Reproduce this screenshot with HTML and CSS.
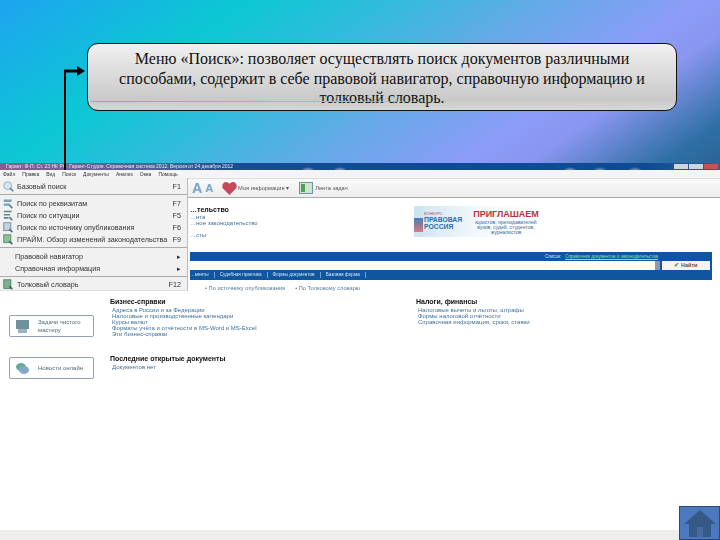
FILE: index.html
```html
<!DOCTYPE html>
<html lang="ru">
<head>
<meta charset="utf-8">
<title>Меню Поиск</title>
<link rel="stylesheet" href="styles.css">
</head>
<body>
<div class="slide">
  <header class="hero">
    <div class="callout">
      <p>Меню «Поиск»: позволяет осуществлять поиск документов различными способами, содержит в себе правовой навигатор, справочную информацию и толковый словарь.</p>
      <span class="callout-line"></span>
    </div>
    <svg class="arrow" width="32" height="127" viewBox="0 0 32 127">
      <path d="M3 127V28" fill="none" stroke="#000" stroke-width="2"/>
      <path d="M2 28H16" fill="none" stroke="#000" stroke-width="3"/>
      <path d="M15 23l8 5-8 5z" fill="#000"/>
    </svg>
  </header>
  <section class="app">
    <div class="titlebar">
      <span class="title-text">Гарант: Ф-П. Ст. 23 НК РФ. Гарант-Студия. Справочная система 2012. Версия от 24 декабря 2012</span>
      <span class="win-btns"><i class="wb wb-g"></i><i class="wb wb-g"></i><i class="wb wb-r"></i></span>
    </div>
    <nav class="menubar"><span>Файл</span><span>Правка</span><span>Вид</span><span>Поиск</span><span>Документы</span><span>Анализ</span><span>Окна</span><span>Помощь</span></nav>
    <div class="toolbar">
      <span class="tb-a tb-a1">А</span><span class="tb-a tb-a2">А</span>
      <svg class="heart" width="15" height="13" viewBox="0 0 15 13"><path d="M7.5 13L1 6.500C-1 3.500 1.500 0 4 0c1.500 0 3 1 3.500 2C8 1 9.500 0 11 0c2.500 0 5 3.500 3 6.500z" fill="#c8475a"/></svg>
      <span class="tb-label">Моя информация ▾</span>
      <svg class="tape" width="14" height="12" viewBox="0 0 14 12"><rect x=".5" y=".5" width="13" height="11" fill="#cfe4c9" stroke="#6d93b5"/><rect x="2" y="2" width="4" height="8" fill="#4f9f64"/></svg>
      <span class="tb-label">Лента задач</span>
    </div>
    <main class="content">
      <div class="top-row">
        <div class="law">
          <h3>…тельство</h3>
          <a>…нта</a>
          <a>…ное законодательство</a>
          <a class="gap">…сты</a>
        </div>
        <div class="banner">
          <div class="banner-left"><small>КОНКУРС</small><b>ПРАВОВАЯ</b><b>РОССИЯ</b></div>
          <div class="banner-right"><b>ПРИГЛАШАЕМ</b><span>юристов, преподавателей</span><span>вузов, судей, студентов,</span><span>журналистов</span></div>
        </div>
      </div>
      <div class="search">
        <div class="search-top"><span>Список:</span><a>Справочник документов и законодательства</a></div>
        <div class="search-mid"><div class="search-input"><i></i></div><button class="find"><em>✔</em> Найти</button></div>
        <div class="search-tabs"><span>…менты</span><span>Судебная практика</span><span>Формы документов</span><span>Базовая форма</span></div>
      </div>
      <div class="sublinks"><span>• По источнику опубликования</span><span>• По Толковому словарю</span></div>
      <div class="columns">
        <aside class="cards">
          <div class="card">
            <svg width="15" height="15" viewBox="0 0 15 15"><rect x="1" y="1" width="13" height="9" fill="#6f8f9b"/><rect x="3" y="10" width="9" height="4" fill="#9ab3b8"/></svg>
            <span>Задачи чистого<br>мастеру</span>
          </div>
          <div class="card">
            <svg width="15" height="13" viewBox="0 0 15 13"><ellipse cx="6" cy="5" rx="5" ry="4" fill="#69a99c"/><ellipse cx="9" cy="8" rx="5" ry="4" fill="#7fa9c4"/></svg>
            <span>Новости онлайн</span>
          </div>
        </aside>
        <div class="col-mid">
          <section class="group">
            <h3>Бизнес-справки</h3>
            <a>Адреса в России и за Федерации</a>
            <a>Налоговые и производственные календари</a>
            <a>Курсы валют</a>
            <a>Форматы учёта и отчётности в MS-Word и MS-Excel</a>
            <a>Эти бизнес-справки</a>
          </section>
          <section class="group group-last">
            <h3>Последние открытые документы</h3>
            <a>Документов нет</a>
          </section>
        </div>
        <section class="group col-right">
          <h3>Налоги, финансы</h3>
          <a>Налоговые вычеты и льготы, штрафы</a>
          <a>Формы налоговой отчётности</a>
          <a>Справочная информация, сроки, ставки</a>
        </section>
      </div>
    </main>
    <div class="statusbar"></div>
    <ul class="dropdown">
      <li class="item"><svg class="mi" width="14" height="14" viewBox="0 0 14 14"><circle cx="6" cy="6" r="5" fill="#d8e6ef" stroke="#7fa3bd"/><path d="M9 9l4 4" stroke="#5b8199" stroke-width="2"/></svg><span>Базовый поиск</span><kbd>F1</kbd></li>
      <li class="rule"></li>
      <li class="item"><svg class="mi" width="14" height="14" viewBox="0 0 14 14"><path d="M1 2h10v3H1zM1 7h8v3H1z" fill="#7ba0b8"/><path d="M8 9l4 4" stroke="#4c7a8f" stroke-width="2"/></svg><span>Поиск по реквизитам</span><kbd>F7</kbd></li>
      <li class="item"><svg class="mi" width="14" height="14" viewBox="0 0 14 14"><path d="M1 2h10M1 6h8M1 10h6" stroke="#5c8a8a" stroke-width="2"/><path d="M8 9l4 4" stroke="#4c7a8f" stroke-width="2"/></svg><span>Поиск по ситуации</span><kbd>F5</kbd></li>
      <li class="item"><svg class="mi" width="14" height="14" viewBox="0 0 14 14"><rect x="1" y="1" width="9" height="10" fill="#c7d3dc" stroke="#5f7d97"/><path d="M8 9l4 4" stroke="#4c6a8f" stroke-width="2"/></svg><span>Поиск по источнику опубликования</span><kbd>F6</kbd></li>
      <li class="item"><svg class="mi" width="14" height="14" viewBox="0 0 14 14"><rect x="1" y="1" width="9" height="10" fill="#8fc09a" stroke="#4d7f62"/><path d="M8 9l4 4" stroke="#3b6f55" stroke-width="2"/></svg><span>ПРАЙМ. Обзор изменений законодательства</span><kbd>F9</kbd></li>
      <li class="rule"></li>
      <li class="item"><span class="noicon">Правовой навигатор</span><kbd class="tri">▸</kbd></li>
      <li class="item"><span class="noicon">Справочная информация</span><kbd class="tri">▸</kbd></li>
      <li class="rule rule-tight"></li>
      <li class="item"><svg class="mi" width="14" height="14" viewBox="0 0 14 14"><rect x="1" y="1" width="9" height="11" fill="#7fb08d" stroke="#3d7a5c"/><path d="M8 9l4 4" stroke="#3b6f55" stroke-width="2"/></svg><span>Толковый словарь</span><kbd>F12</kbd></li>
    </ul>
  </section>
  <a class="home"><svg width="34" height="28" viewBox="0 0 34 28"><path d="M17 1L1 15h5v13h22V15h5z" fill="#365a88"/><rect x="14" y="18" width="6" height="10" fill="#46699f"/></svg></a>
</div>
</body>
</html>
```

FILE: styles.css
```css
* { box-sizing: border-box; }
html, body { margin: 0; height: 100%; overflow: hidden; }
body { font-family: "Liberation Sans", Arial, sans-serif; background: #fff; }
h3, p, ul { margin: 0; padding: 0; }
.slide { position: relative; width: 720px; height: 540px; display: flex; flex-direction: column; overflow: hidden; }

.hero {
  position: relative;
  z-index: 2;
  height: 163px;
  padding: 43px 43px 0 87px;
  background: linear-gradient(146deg, #1ea4f0 0%, #0cc8d2 26%, #2fbcdc 40%, #62abe6 56%, #8c9cf8 73%, #8a96f0 80%, #2f6fa4 94%, #2a6498 100%);
}
.callout {
  position: relative;
  height: 68px;
  border: 1px solid #111;
  border-radius: 11px;
  background: linear-gradient(#f0f0f0, #c9c9c9 85%, #d8d8d8);
  padding: 0 20px;
}
.callout p {
  font-family: "Liberation Serif", "Times New Roman", serif;
  font-size: 16px;
  line-height: 19.500px;
  color: #111;
  text-align: center;
  padding-top: 5px;
}
.callout-line { position: absolute; left: 3px; bottom: 8px; width: 360px; height: 1px; background: linear-gradient(90deg, #6fb6b8, #9cc4c6 70%, rgba(160,200,200,0)); }
.arrow { position: absolute; left: 62px; top: 43px; overflow: visible; }

.app { position: relative; flex: 1; display: flex; flex-direction: column; background: #fff; }
.titlebar { height: 7px; display: flex; justify-content: space-between; align-items: center; overflow: hidden;
  background:
    radial-gradient(ellipse 7px 3px at 308px 7px, #8fa7c4, rgba(143,167,196,0)),
    radial-gradient(ellipse 7px 3px at 340px 7px, #8fa7c4, rgba(143,167,196,0)),
    radial-gradient(ellipse 7px 3px at 570px 7px, #7f9cbc, rgba(127,156,188,0)),
    radial-gradient(ellipse 7px 3px at 600px 7px, #7f9cbc, rgba(127,156,188,0)),
    radial-gradient(ellipse 7px 3px at 635px 7px, #7f9cbc, rgba(127,156,188,0)),
    linear-gradient(90deg, #8a5f8f 0, #4f5f95 22%, #1a4c94 33%, #0f4a94 60%, #0f4a94 90%, #315f9a 100%); }
.title-text { font-size: 5px; line-height: 7px; color: #e8e8f0; white-space: nowrap; padding-left: 6px; filter: blur(.3px); }
.win-btns { display: flex; gap: 1px; padding-right: 2px; }
.wb { display: block; width: 14px; height: 5px; background: #cdd5de; }
.wb-r { background: #c8505a; }
.menubar { height: 8px; display: flex; gap: 7px; padding-left: 3px; background: #f4f4f4; font-size: 5px; line-height: 8px; color: #333; filter: blur(.3px); }
.toolbar { height: 20px; display: flex; align-items: center; padding-left: 192px; background: linear-gradient(#f8f8f8, #eee); border-bottom: 1px solid #aaa; border-top: 1px solid #ddd; }
.tb-a { font-weight: 700; color: #7aa3c4; line-height: 1; }
.tb-a1 { font-size: 14px; margin-right: 3px; }
.tb-a2 { font-size: 11px; margin-right: 9px; }
.heart { margin-right: 1px; }
.tb-label { font-size: 5.700px; color: #555; margin-right: 10px; filter: blur(.3px); }
.tape { margin-right: 2px; }

.content { flex: 1; padding-left: 190px; display: flex; flex-direction: column; font-size: 6px; line-height: 6px; }
.content a { display: block; color: #3f6f99; white-space: nowrap; filter: blur(.25px); }
.content h3 { font-size: 7px; line-height: 8px; color: #111; font-weight: 700; white-space: nowrap; filter: blur(.2px); margin-bottom: 1px; }
.top-row { height: 54px; display: grid; grid-template-columns: 224px 130px; padding-top: 8px; }
.law h3 { margin-bottom: 0; }
.law .gap { margin-top: 6px; }
.banner { display: flex; height: 31px; background: linear-gradient(90deg, #cfe4f2, #f4f9fc 50%, #fff); }
.banner-left { width: 54px; padding: 5px 0 0 10px; display: flex; flex-direction: column; color: #2d6ea8; font-size: 6.800px; line-height: 7px; background: linear-gradient(#cfe4f2 38%, #3f7fba 38%, #e07a78 85%, #cfe4f2 85%) left top / 9px 100% no-repeat; }
.banner-left small { font-size: 4px; line-height: 5px; color: #b0405a; }
.banner-right { padding-top: 3px; display: flex; flex-direction: column; align-items: center; color: #3d6a99; font-size: 5.100px; line-height: 5px; white-space: nowrap; flex: 1; }
.banner-right b { color: #c0303a; font-size: 9px; line-height: 11px; }

.search { width: 522px; height: 28px; display: flex; flex-direction: column; background: #0f559f; }
.search-top { height: 9px; display: flex; justify-content: flex-end; align-items: center; gap: 4px; padding-right: 54px; color: #cfe6f7; font-size: 4.500px; }
.search-top a { color: #8fe0a0; text-decoration: underline; filter: none; }
.search-mid { height: 9px; display: flex; gap: 2px; }
.search-input { width: 470px; background: #fdfcf5; position: relative; }
.search-input i { position: absolute; right: 0; top: 0; background: #8a9ab5; width: 5px; height: 9px; }
.find { width: 48px; height: 9px; border: 0; padding: 0; background: #f4f4f4; font: 700 5.500px/9px "Liberation Sans", sans-serif; color: #555; }
.find em { font-style: normal; color: #5b8a4b; }
.search-tabs { flex: 1; display: flex; gap: 5px; align-items: center; color: #d5e6f4; font-size: 4.700px; white-space: nowrap; filter: blur(.2px); }
.search-tabs span { padding-right: 5px; border-right: 1px solid #6fa0cc; }

.sublinks { height: 15px; display: flex; gap: 10px; align-items: center; color: #5c7a95; font-size: 5.700px; padding-left: 15px; filter: blur(.25px); }

.columns { position: relative; display: grid; grid-template-columns: 306px 1fr; padding-top: 3px; margin-left: -80px; }
.cards { position: absolute; left: -101px; top: 20px; display: flex; flex-direction: column; gap: 20px; }
.card { width: 85px; height: 22px; display: flex; align-items: center; gap: 8px; padding-left: 5px; border: 1px solid #8fa3b5; border-radius: 2px; background: #fff; font-size: 6px; line-height: 8px; color: #567; filter: blur(.2px); }
.group a { padding-left: 2px; }
.group-last { margin-top: 18px; }
.statusbar { height: 10px; background: #eeeeec; }

.dropdown { position: absolute; left: 0; top: 15px; width: 188px; height: 113px; list-style: none; background: #f1f1f1; border-right: 1px solid #bbb; border-bottom: 1px solid #ddd; padding-top: 2px; font-size: 7.200px; color: #333; }
.item { height: 12px; display: flex; align-items: center; gap: 3px; padding: 0 6px 0 3px; white-space: nowrap; filter: blur(.25px); }
.item span { flex: 1; }
.noicon { padding-left: 12px; }
.item kbd { font: 7.200px "Liberation Sans", sans-serif; }
.rule { height: 5px; display: flex; align-items: center; }
.rule-tight { height: 4px; }
.rule::after { content: ""; flex: 1; height: 1px; background: #aaa; }
.item .mi { flex: none; width: 11px; height: 11px; }

.home { position: absolute; right: 0; bottom: 0; width: 41px; height: 34px; display: flex; align-items: flex-end; justify-content: center; padding-bottom: 2px; background: #4c78c0; border: 1px solid #2b4a78; z-index: 3; }
```
